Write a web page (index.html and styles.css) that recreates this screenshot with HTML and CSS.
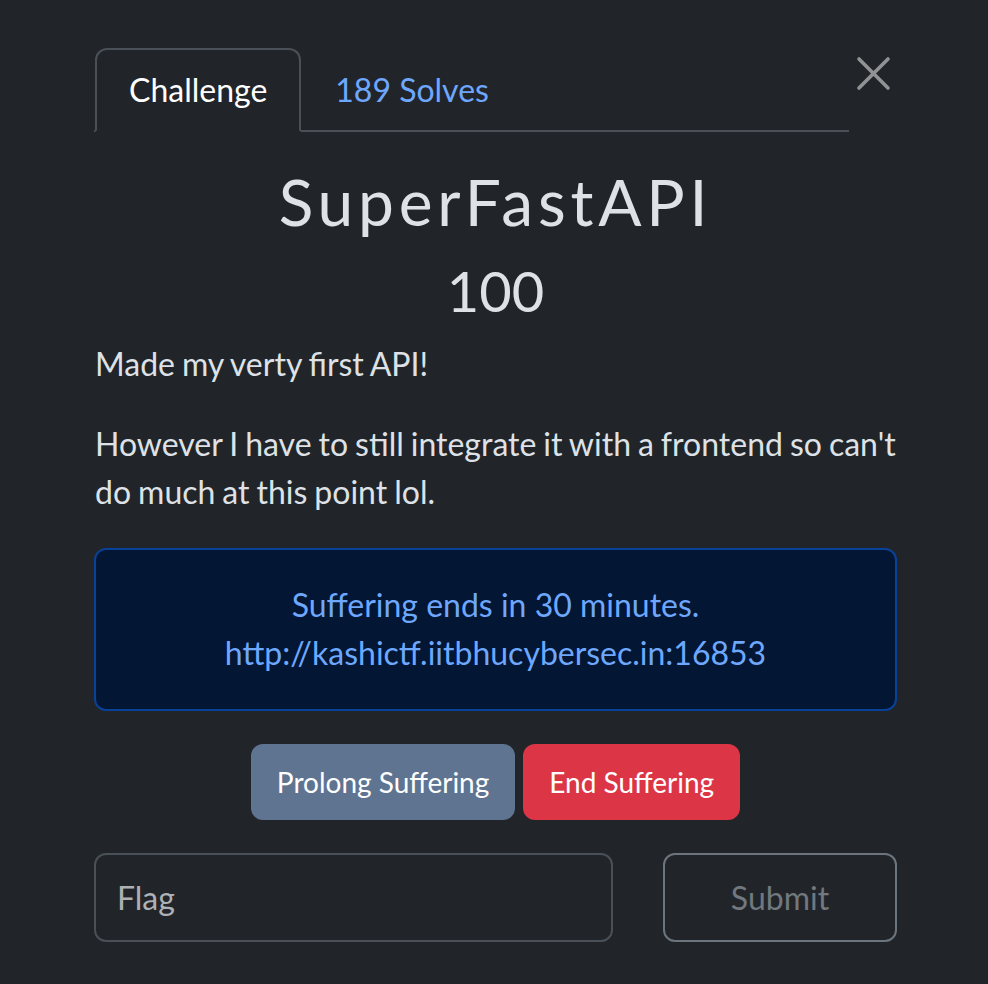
FILE: index.html
```html
<!DOCTYPE html>
<html lang="en">
<head>
<meta charset="utf-8">
<title>SuperFastAPI</title>
<link rel="stylesheet" href="styles.css">
</head>
<body>
<div class="modal">
  <div class="header">
    <nav class="tabs">
      <a class="tab active">Challenge</a>
      <a class="tab">189 Solves</a>
    </nav>
    <button class="close" aria-label="Close">
      <svg viewBox="0 0 48 48" width="48" height="48"><path d="M10 10 L39 39 M39 10 L10 39" stroke="#fff" stroke-width="3.6" stroke-linecap="round" fill="none"/></svg>
    </button>
  </div>
  <h2 class="name">SuperFastAPI</h2>
  <h3 class="value">100</h3>
  <div class="desc">
    <p>Made my verty first API!</p>
    <p>However I have to still integrate it with a frontend so can't do much at this point lol.</p>
  </div>
  <div class="alert">
    <div>Suffering ends in 30 minutes.</div>
    <div>http://kashictf.iitbhucybersec.in:16853</div>
  </div>
  <div class="actions">
    <button class="btn prolong">Prolong Suffering</button>
    <button class="btn end">End Suffering</button>
  </div>
  <form class="submit-row">
    <input class="flag" type="text" placeholder="Flag">
    <button class="btn submit" type="button">Submit</button>
  </form>
</div>
</body>
</html>
```

FILE: styles.css
```css
html, body {
  margin: 0;
  padding: 0;
  background: #212529;
}
body {
  font-family: Lato, "Open Sans", sans-serif;
  font-size: 32px;
  line-height: 48px;
  color: #dee2e6;
}
.modal {
  width: 803px;
  padding: 48px 91px 0 94px;
}
.header {
  display: flex;
  align-items: flex-start;
}
.tabs {
  flex: 1;
  display: flex;
  border-bottom: 2px solid #495057;
  padding-left: 1px;
}
.tab {
  display: block;
  padding: 16px 32px;
  border: 2px solid transparent;
  border-radius: 12px 12px 0 0;
  margin-bottom: -2px;
  color: #6ea8fe;
  line-height: 48px;
}
.tab.active {
  color: #fff;
  border-color: #495057 #495057 #212529;
  background: #212529;
}
.close {
  width: 48px;
  height: 48px;
  padding: 0;
  margin-top: 1px;
  border: 0;
  background: transparent;
  opacity: 0.5;
  display: flex;
}
.name {
  margin: 32px 0 16px;
  text-align: center;
  font-size: 64px;
  font-weight: 400;
  line-height: 1.2;
  letter-spacing: 4.8px;
}
.value {
  margin: 0 0 16px;
  text-align: center;
  font-size: 56px;
  font-weight: 400;
  line-height: 1.2;
}
.desc {
  padding-left: 1px;
  word-spacing: -1.2px;
}
.desc p {
  margin: 0 0 32px;
}
.alert {
  border: 2px solid #084298;
  background: #031633;
  color: #6ea8fe;
  border-radius: 12px;
  padding: 31.5px 32px;
  text-align: center;
}
.actions {
  display: flex;
  justify-content: center;
  gap: 8px;
  margin-top: 33px;
}
.btn {
  font-family: inherit;
  font-size: 28px;
  line-height: 43px;
  padding: 15px 24px 14px;
  border: 2px solid transparent;
  border-radius: 12px;
  color: #fff;
}
.prolong {
  background: #5e7491;
  border-color: #5e7491;
}
.end {
  background: #dc3545;
  border-color: #dc3545;
}
.submit-row {
  display: grid;
  grid-template-columns: 1fr 234px;
  gap: 50px;
  margin-top: 33px;
}
.flag {
  box-sizing: border-box;
  height: 89px;
  padding: 0 21px;
  font-family: inherit;
  font-size: 32px;
  color: #dee2e6;
  background: #212529;
  border: 2px solid #495057;
  border-radius: 12px;
}
.flag::placeholder {
  color: #adb1b5;
}
.submit {
  height: 89px;
  padding: 0 24px;
  font-size: 32px;
  background: transparent;
  border-color: #6c757d;
  color: #71787f;
}
```
